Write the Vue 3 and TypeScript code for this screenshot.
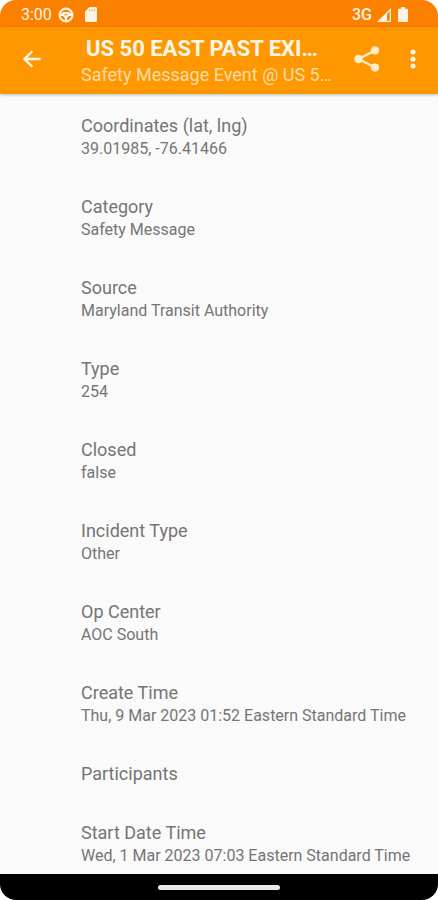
<script setup lang="ts">
interface Detail {
  label: string
  value?: string
}

const title: string = 'US 50 EAST PAST EXI…'
const subtitle: string = 'Safety Message Event @ US 5…'

const details: Detail[] = [
  { label: 'Coordinates (lat, lng)', value: '39.01985, -76.41466' },
  { label: 'Category', value: 'Safety Message' },
  { label: 'Source', value: 'Maryland Transit Authority' },
  { label: 'Type', value: '254' },
  { label: 'Closed', value: 'false' },
  { label: 'Incident Type', value: 'Other' },
  { label: 'Op Center', value: 'AOC South' },
  { label: 'Create Time', value: 'Thu, 9 Mar 2023 01:52 Eastern Standard Time' },
  { label: 'Participants' },
  { label: 'Start Date Time', value: 'Wed, 1 Mar 2023 07:03 Eastern Standard Time' },
]
</script>

<template>
  <div class="screen">
    <div class="status-bar">
      <span class="clock">3:00</span>
      <svg class="wheel" viewBox="0 0 16 16" aria-hidden="true">
        <circle cx="8" cy="8" r="6.4" fill="none" stroke="currentColor" stroke-width="2.2" />
        <path d="M2 7.200L5.500 5h5L14 7.200V9h-3L9.200 11v3H6.800v-3L5 9H2z" fill="currentColor" />
        <path d="M6.300 7.800h3.400" stroke="#fb8000" stroke-width="1" />
      </svg>
      <svg class="sd-card" viewBox="0 0 12 15" aria-hidden="true">
        <path
          fill="currentColor"
          fill-rule="evenodd"
          d="M4.500 0H10.500A1.500 1.500 0 0 1 12 1.500V13.500A1.500 1.500 0 0 1 10.500 15H1.500A1.500 1.500 0 0 1 0 13.500V4.500zM4.500 2.500v1.500h.8V2.500zM6.800 2.500v1.500h.8V2.500zM9 2.500v1.500h.8V2.500z"
        />
      </svg>
      <span class="network">3G</span>
      <svg class="signal" viewBox="0 0 14 14" aria-hidden="true">
        <path d="M14 0V14H0z" fill="currentColor" />
        <path d="M10 6L12.700 3.200V12.700H10z" fill="#fb8000" />
      </svg>
      <svg class="battery" viewBox="0 0 10 15" aria-hidden="true">
        <path
          d="M3 0h4v1.700h2a1 1 0 0 1 1 1V14a1 1 0 0 1-1 1H1a1 1 0 0 1-1-1V2.700a1 1 0 0 1 1-1h2z"
          fill="currentColor"
        />
      </svg>
    </div>

    <header class="app-bar">
      <button class="icon-button back" type="button" aria-label="Back">
        <svg class="arrow" viewBox="0 0 18 18" aria-hidden="true">
          <path d="M17.500 9H1.800M9.300 1.200L1.500 9L9.300 16.800" fill="none" stroke="currentColor" stroke-width="2.300" />
        </svg>
      </button>
      <div class="headings">
        <h1 class="title">{{ title }}</h1>
        <p class="subtitle">{{ subtitle }}</p>
      </div>
      <button class="icon-button share" type="button" aria-label="Share">
        <svg class="share-icon" viewBox="0 0 26 26" aria-hidden="true">
          <path d="M21 4.400L4.500 13L21 21.600" fill="none" stroke="currentColor" stroke-width="2.300" />
          <circle cx="21" cy="4.400" r="4.100" fill="currentColor" />
          <circle cx="4.500" cy="13" r="4.200" fill="currentColor" />
          <circle cx="21" cy="21.600" r="4.100" fill="currentColor" />
        </svg>
      </button>
      <button class="icon-button more" type="button" aria-label="More options">
        <svg class="dots" viewBox="0 0 6 20" aria-hidden="true">
          <circle cx="3" cy="3" r="2.500" fill="currentColor" />
          <circle cx="3" cy="10" r="2.500" fill="currentColor" />
          <circle cx="3" cy="17" r="2.500" fill="currentColor" />
        </svg>
      </button>
    </header>

    <main class="content">
      <dl class="details">
        <div v-for="item in details" :key="item.label" class="detail">
          <dt class="label">{{ item.label }}</dt>
          <dd v-if="item.value" class="value">{{ item.value }}</dd>
        </div>
      </dl>
    </main>

    <footer class="nav-bar">
      <div class="handle"></div>
    </footer>
  </div>
</template>

<style>
body {
  margin: 0;
  background: #fff;
}
</style>

<style scoped>
.screen {
  display: flex;
  flex-direction: column;
  min-height: 100vh;
  overflow: hidden;
  border-radius: 16px;
  background: #fafafa;
  font-family: Roboto, 'Liberation Sans', sans-serif;
}

.status-bar {
  display: flex;
  align-items: center;
  height: 27px;
  padding: 2px 30px 0 21px;
  box-sizing: border-box;
  background: #fb8000;
  color: #fff3e2;
}

.clock,
.network {
  font-size: 16px;
  line-height: 20px;
}

.network {
  margin-left: auto;
  font-weight: 500;
}

.wheel {
  width: 16px;
  height: 16px;
  margin-left: 6px;
}

.sd-card {
  width: 12px;
  height: 15px;
  margin-left: 11px;
}

.signal {
  width: 14px;
  height: 14px;
  margin-left: 5px;
}

.battery {
  width: 10px;
  height: 15px;
  margin-left: 7px;
}

.app-bar {
  position: relative;
  display: flex;
  align-items: flex-start;
  height: 67px;
  padding-right: 8px;
  background: #ff9800;
  box-shadow: 0 1px 3px rgba(0, 0, 0, 0.25);
  color: #fff7ea;
}

.icon-button {
  display: flex;
  flex: none;
  align-items: center;
  justify-content: center;
  height: 63px;
  padding: 0;
  border: 0;
  background: none;
  color: inherit;
  cursor: pointer;
}

.back {
  width: 64px;
}

.share {
  width: 58px;
  color: #ffecc9;
}

.more {
  width: 34px;
}

.arrow {
  width: 18px;
  height: 18px;
}

.share-icon {
  width: 26px;
  height: 26px;
}

.dots {
  width: 6px;
  height: 20px;
}

.headings {
  flex: 1;
  min-width: 0;
  padding: 8px 0 0 17px;
}

.title,
.subtitle {
  margin: 0;
  overflow: hidden;
  white-space: nowrap;
}

.title {
  padding-left: 5px;
  font-size: 22px;
  font-weight: 700;
  line-height: 28px;
}

.subtitle {
  color: #ffdca8;
  font-size: 18px;
  font-weight: 400;
  line-height: 24px;
}

.content {
  flex: 1;
  padding: 21px 16px 6px 81px;
}

.details {
  display: flex;
  flex-direction: column;
  gap: 36px;
  margin: 0;
}

.label,
.value {
  margin: 0;
  color: #757575;
}

.label {
  font-size: 18px;
  line-height: 22px;
}

.value {
  font-size: 16px;
  line-height: 23px;
}

.detail {
  min-height: 23px;
}

.nav-bar {
  display: flex;
  align-items: center;
  justify-content: center;
  height: 26px;
  background: #000;
}

.handle {
  width: 122px;
  height: 5px;
  border-radius: 3px;
  background: #e8e8e8;
}
</style>
